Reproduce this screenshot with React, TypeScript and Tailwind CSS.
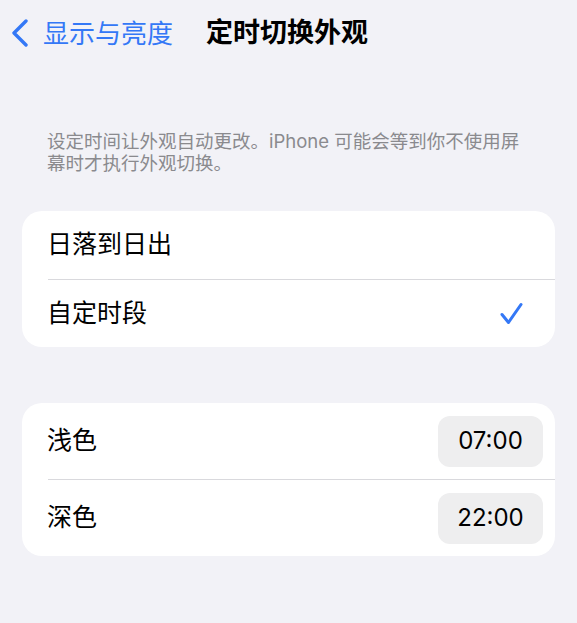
const font = { fontFamily: '"Inter", "Noto Sans CJK SC", sans-serif' };

const Chevron = () => (
  <svg width="18" height="28" viewBox="0 0 18 28" fill="none">
    <path d="M15 2 L3 14 L15 26" stroke="#3478f6" strokeWidth="3.4" strokeLinecap="round" strokeLinejoin="round" />
  </svg>
);

const Check = () => (
  <svg width="24" height="23" viewBox="0 0 24 23" fill="none">
    <path d="M2 12.5 L8.5 20.5 L21 2.5" stroke="#3478f6" strokeWidth="3" strokeLinecap="round" strokeLinejoin="round" />
  </svg>
);

const Divider = () => <div className="ml-[26px] h-px bg-[#d9d9dd]" />;

const TimeRow = ({ label, time }: { label: string; time: string }) => (
  <div className="flex h-[76px] items-center justify-between pl-[25px] pr-3">
    <span className="text-[25px] text-black">{label}</span>
    <span className="flex h-[51px] w-[105px] items-center justify-center rounded-[12px] bg-[#eeeeef] text-[24px] text-black">
      {time}
    </span>
  </div>
);

export default function App() {
  return (
    <div className="min-h-[623px] w-full bg-[#f2f2f7]" style={font}>
      <div className="flex h-[66px] items-center pl-[11px]">
        <div className="flex items-center gap-[14px]">
          <Chevron />
          <span className="text-[26px] text-[#3478f6]">显示与亮度</span>
        </div>
        <span className="ml-[33px] text-[27px] font-bold text-black">定时切换外观</span>
      </div>

      <p className="ml-[47px] mt-[64px] w-[482px] text-[18.5px] leading-[22px] text-[#8a8a8e]">
        设定时间让外观自动更改。iPhone 可能会等到你不使用屏幕时才执行外观切换。
      </p>

      <div className="mx-[22px] mt-[37px] overflow-hidden rounded-[20px] bg-white">
        <div className="flex h-[68px] items-center pl-[25px]">
          <span className="text-[25px] text-black">日落到日出</span>
        </div>
        <Divider />
        <div className="flex h-[67px] items-center justify-between pl-[25px] pr-[31px]">
          <span className="text-[25px] text-black">自定时段</span>
          <Check />
        </div>
      </div>

      <div className="mx-[22px] mt-[56px] overflow-hidden rounded-[20px] bg-white">
        <TimeRow label="浅色" time="07:00" />
        <Divider />
        <TimeRow label="深色" time="22:00" />
      </div>
    </div>
  );
}
